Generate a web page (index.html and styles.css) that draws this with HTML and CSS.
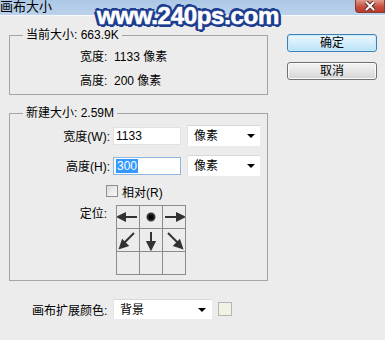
FILE: index.html
```html
<!DOCTYPE html>
<html lang="zh-CN">

<head>
    <meta charset="UTF-8">
    <title>画布大小</title>
    <link rel="stylesheet" href="styles.css">
</head>

<body>
    <div class="titlebar">
        <span class="titulo">画布大小</span>
        <span class="fechar">
            <svg width="16" height="10" viewBox="0 0 16 10">
                <path d="M4 1 L12 9 M12 1 L4 9" stroke="#5a2a22" stroke-width="4" />
                <path d="M4 1 L12 9 M12 1 L4 9" stroke="#fff" stroke-width="2" />
            </svg>
        </span>
    </div>

    <!-- marca d'agua por cima do dialogo -->
    <div class="marca">www.240ps.com</div>

    <div class="dialogo">
        <div class="principal">
            <fieldset class="grupo grupo-atual">
                <legend>当前大小: 663.9K</legend>
                <div class="info">宽度:&nbsp; 1133 像素</div>
                <div class="info">高度:&nbsp; 200 像素</div>
            </fieldset>

            <fieldset class="grupo grupo-novo">
                <legend>新建大小: 2.59M</legend>
                <div class="linha">
                    <span class="rotulo">宽度(W):</span>
                    <span class="campo">1133</span>
                    <span class="lista">像素<i class="seta"></i></span>
                </div>
                <div class="linha">
                    <span class="rotulo">高度(H):</span>
                    <span class="campo ativo"><span class="selecao">300</span></span>
                    <span class="lista">像素<i class="seta"></i></span>
                </div>
                <div class="relativo">
                    <span class="caixa"></span>
                    <span>相对(R)</span>
                </div>
                <div class="posicao">
                    <span class="rotulo">定位:</span>
                    <div class="grade">
                        <span class="celula">
                            <svg viewBox="0 0 22 22"><line x1="20" y1="11" x2="6" y2="11" /><polygon points="1,11 8,7.5 8,14.5" /></svg>
                        </span>
                        <span class="celula">
                            <svg viewBox="0 0 22 22"><circle cx="11" cy="11" r="3.5" fill="#000" /></svg>
                        </span>
                        <span class="celula">
                            <svg viewBox="0 0 22 22"><line x1="2" y1="11" x2="16" y2="11" /><polygon points="21,11 14,7.5 14,14.5" /></svg>
                        </span>
                        <span class="celula">
                            <svg viewBox="0 0 22 22"><line x1="17" y1="4" x2="7" y2="14" /><polygon points="3,19 5.5,11.6 10.4,16.5" /></svg>
                        </span>
                        <span class="celula">
                            <svg viewBox="0 0 22 22"><line x1="11" y1="3" x2="11" y2="14" /><polygon points="11,20 7.5,13 14.5,13" /></svg>
                        </span>
                        <span class="celula">
                            <svg viewBox="0 0 22 22"><line x1="5" y1="4" x2="15" y2="14" /><polygon points="19,19 16.5,11.6 11.6,16.5" /></svg>
                        </span>
                        <span class="celula"></span>
                        <span class="celula"></span>
                        <span class="celula"></span>
                    </div>
                </div>
            </fieldset>

            <div class="extensao">
                <span class="rotulo-ext">画布扩展颜色:</span>
                <span class="lista lista-larga">背景<i class="seta"></i></span>
                <span class="amostra"></span>
            </div>
        </div>

        <div class="botoes">
            <button class="botao botao-ok">确定</button>
            <button class="botao">取消</button>
        </div>
    </div>
</body>

</html>
```

FILE: styles.css
```css
body {
    margin: 0;
    background-color: #ececec;
    font-family: "Liberation Sans", "Noto Sans CJK SC", sans-serif;
    font-size: 12px;
    color: #000;
    width: 385px;
    height: 340px;
    overflow: hidden;
}

.titlebar {
    height: 15px;
    display: flex;
    justify-content: space-between;
    align-items: flex-start;
    background: linear-gradient(#acc7e5, #bcd2eb);
    border-bottom: 1px solid #f6f8fb;
}

.titulo {
    font-size: 13px;
    line-height: 14px;
}

.fechar {
    width: 30px;
    height: 13px;
    display: flex;
    align-items: center;
    justify-content: center;
    box-sizing: border-box;
    border: 1px solid #8a3a30;
    border-top: none;
    border-radius: 0 0 0 4px;
    background: linear-gradient(#e09a8c, #c8503f 55%, #b83a2a);
}

.fechar svg {
    display: block;
}

.marca {
    position: absolute;
    left: 97px;
    top: 2px;
    font-family: "Liberation Sans", sans-serif;
    font-weight: bold;
    font-size: 24px;
    letter-spacing: -0.3px;
    color: #fff;
    -webkit-text-stroke: 0.6px #fff;
    text-shadow:
        2px 0 0 #1d3d8e, -2px 0 0 #1d3d8e, 0 2px 0 #1d3d8e, 0 -2px 0 #1d3d8e,
        2px 2px 0 #1d3d8e, -2px -2px 0 #1d3d8e, 2px -2px 0 #1d3d8e, -2px 2px 0 #1d3d8e,
        3px 1px 0 #1d3d8e, -3px 1px 0 #1d3d8e, 1px 3px 0 #1d3d8e, -1px -3px 0 #1d3d8e;
}

.dialogo {
    display: flex;
    padding-left: 9px;
}

.principal {
    width: 259px;
}

.grupo {
    margin: 0;
    padding: 0;
    border: 1px solid #a4a4a4;
    box-sizing: border-box;
    width: 259px;
    min-width: 0;
}

.grupo legend {
    margin-left: 13px;
    padding: 0 3px;
    line-height: 14px;
}

.grupo-atual {
    margin-top: 12px;
    padding: 3px 0 1px 0;
}

.info {
    line-height: 24px;
    padding-left: 70px;
}

.grupo-novo {
    margin-top: 11px;
    padding: 5px 0 5px 0;
}

.linha {
    display: flex;
    align-items: center;
    height: 21px;
    margin-bottom: 9px;
}

.rotulo {
    width: 100px;
    text-align: right;
    margin-right: 3px;
}

.campo {
    width: 68px;
    height: 18px;
    box-sizing: border-box;
    background-color: #fff;
    border: 1px solid #e2e2e2;
    padding-left: 2px;
    line-height: 16px;
}

.campo.ativo {
    border-color: #8fb6de;
}

.selecao {
    background-color: #3399ff;
    color: #fff;
    padding: 0 1px;
}

.lista {
    position: relative;
    width: 73px;
    height: 21px;
    box-sizing: border-box;
    margin-left: 6px;
    padding-left: 6px;
    line-height: 21px;
    background-color: #fff;
    border-top: 1px solid #d8d8d8;
    border-left: 1px solid #e4e4e4;
}

.seta {
    position: absolute;
    right: 5px;
    top: 8px;
    border-left: 4px solid transparent;
    border-right: 4px solid transparent;
    border-top: 4px solid #000;
}

.relativo {
    display: flex;
    align-items: center;
    height: 12px;
    padding-left: 96px;
    gap: 4px;
    margin-top: 1px;
}

.caixa {
    width: 12px;
    height: 12px;
    box-sizing: border-box;
    border: 1px solid #8e8f8f;
    background: linear-gradient(135deg, #dcdcdc, #f8f8f8);
}

.posicao {
    display: flex;
    align-items: flex-start;
    margin-top: 8px;
}

.posicao .rotulo {
    width: 97px;
    margin-right: 9px;
    line-height: 18px;
}

.grade {
    display: grid;
    grid-template-columns: repeat(3, 22px);
    grid-auto-rows: 22px;
    gap: 1px;
    padding: 1px;
    background-color: #8c8c8c;
}

.celula {
    background-color: #ececec;
}

.celula svg {
    display: block;
    width: 22px;
    height: 22px;
    stroke: #333;
    stroke-width: 2;
    fill: #333;
}

.extensao {
    display: flex;
    align-items: center;
    margin-top: 18px;
    padding-left: 23px;
}

.rotulo-ext {
    width: 78px;
    margin-right: 3px;
}

.lista-larga {
    width: 99px;
    height: 20px;
    line-height: 20px;
    margin-left: 0;
}

.lista-larga .seta {
    top: 8px;
    right: 6px;
}

.amostra {
    width: 14px;
    height: 14px;
    box-sizing: border-box;
    margin-left: 6px;
    border: 1px solid #b5b5b5;
    background-color: #f1f2e4;
}

.botoes {
    margin-left: 19px;
    padding-top: 18px;
    display: flex;
    flex-direction: column;
    gap: 10px;
}

.botao {
    width: 90px;
    height: 18px;
    padding: 0;
    font-family: "Liberation Sans", "Noto Sans CJK SC", sans-serif;
    font-size: 12px;
    line-height: 16px;
    color: #000;
    border: 1px solid #707070;
    border-radius: 3px;
    background: linear-gradient(#f3f3f3, #e6e6e6 50%, #d4d4d4);
    box-shadow: inset 0 0 0 1px #fbfbfb;
}

.botao-ok {
    border-color: #3c7fb1;
    background: linear-gradient(#eaf6fd, #d4eefc 50%, #b9e2f9);
    box-shadow: inset 0 0 0 1px #c8ecfd;
}
```
